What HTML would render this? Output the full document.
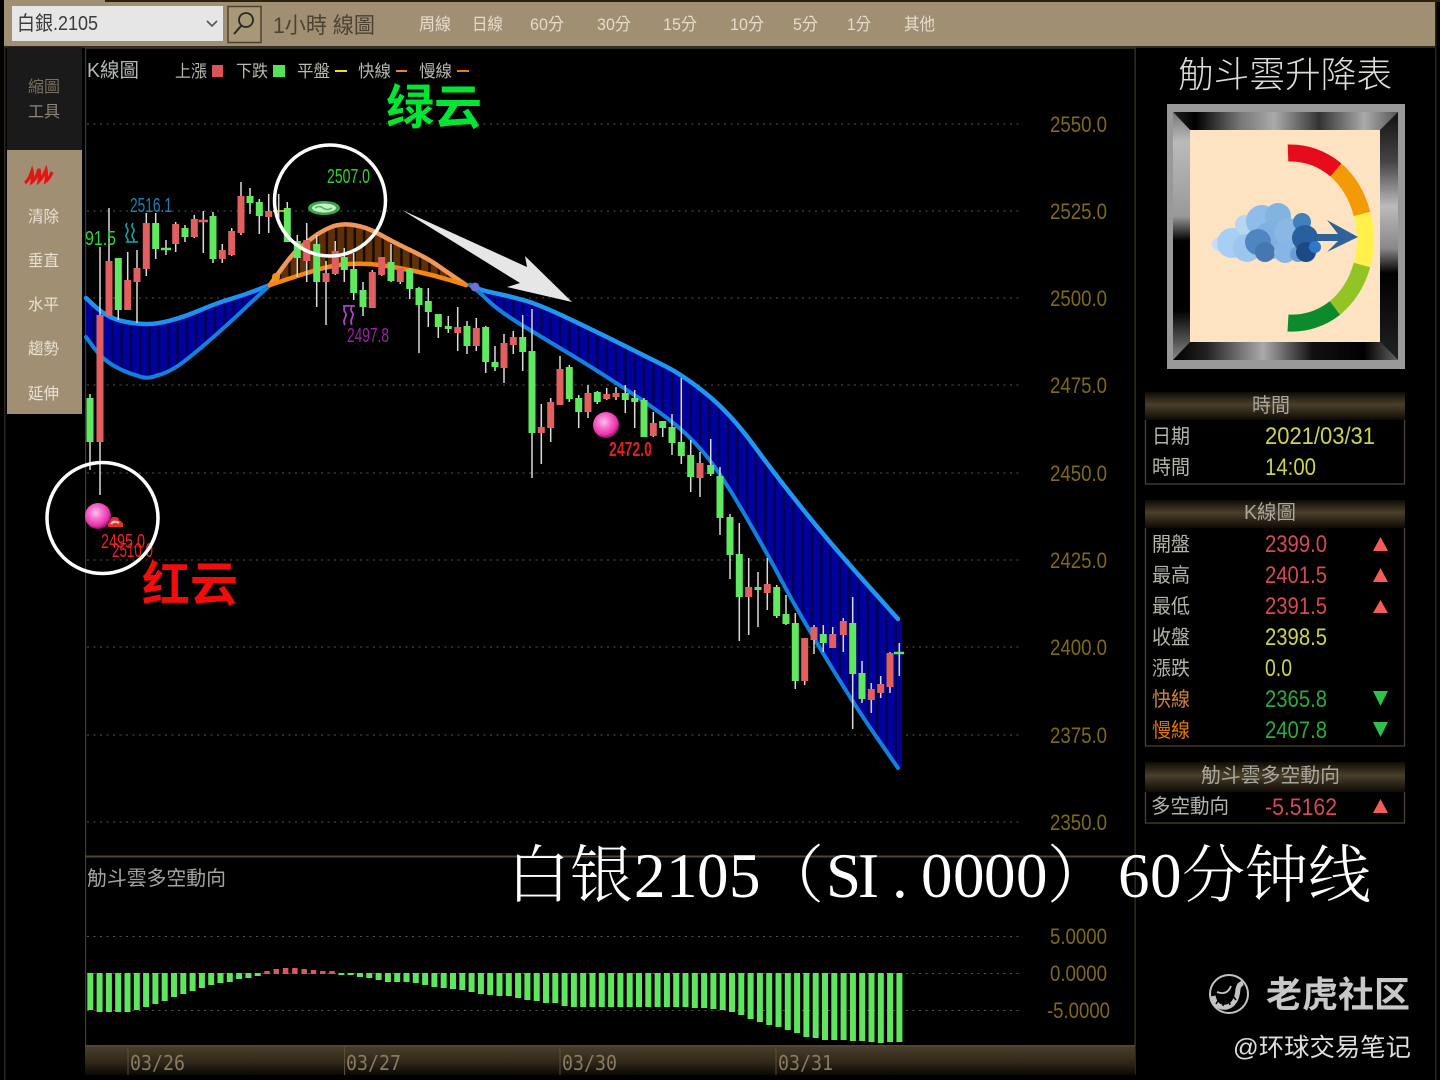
<!DOCTYPE html>
<html><head><meta charset="utf-8"><title>白银2105 60分钟线</title>
<style>
html,body{margin:0;padding:0;background:#000}
svg{display:block}
text{font-family:"Liberation Sans","Noto Sans CJK TC",sans-serif;white-space:pre}
.side{fill:#e9e1d2;font-size:16px}
.leg{fill:#b9b9b0;font-size:17px}
.lb{fill:#b4b4ac;font-size:20px}
.hd{fill:#a8a8a0;font-size:20px}
.ax{fill:#7f6a18;font-size:22px}
.val{font-size:24px}
.mn{fill:#e6dccb;font-size:17px}
.dt{font-family:"DejaVu Sans Mono",monospace;font-size:20px;fill:#8a7b60}
</style></head>
<body>
<svg width="1440" height="1080" viewBox="0 0 1440 1080" xmlns="http://www.w3.org/2000/svg">
<defs>
<pattern id="bl" patternUnits="userSpaceOnUse" x="85.5" y="0" width="9.33" height="10"><rect width="9.33" height="10" fill="#00009c"/><rect x="6.8" width="2.53" height="10" fill="#00004c"/></pattern>
<pattern id="br" patternUnits="userSpaceOnUse" x="85.5" y="0" width="9.33" height="10"><rect width="9.33" height="10" fill="#5f3008"/><rect x="6.8" width="2.53" height="10" fill="#160b02"/></pattern>
<linearGradient id="hdg" x1="0" y1="0" x2="0" y2="1"><stop offset="0" stop-color="#0e0b05"/><stop offset=".45" stop-color="#4a3f2a"/><stop offset="1" stop-color="#0e0b05"/></linearGradient>
<linearGradient id="axg" x1="0" y1="0" x2="0" y2="1"><stop offset="0" stop-color="#4a3f2b"/><stop offset=".55" stop-color="#30281a"/><stop offset="1" stop-color="#0a0804"/></linearGradient>
<linearGradient id="bt" x1="0" y1="0" x2="1" y2="0"><stop offset="0" stop-color="#222"/><stop offset=".1" stop-color="#000"/><stop offset=".3" stop-color="#777"/><stop offset=".45" stop-color="#aaa"/><stop offset=".65" stop-color="#333"/><stop offset=".85" stop-color="#aaa"/><stop offset="1" stop-color="#555"/></linearGradient>
<linearGradient id="bb" x1="0" y1="0" x2="1" y2="0"><stop offset="0" stop-color="#000"/><stop offset=".15" stop-color="#222"/><stop offset=".4" stop-color="#aaa"/><stop offset=".62" stop-color="#111"/><stop offset=".85" stop-color="#000"/><stop offset="1" stop-color="#666"/></linearGradient>
<linearGradient id="bl1" x1="0" y1="0" x2="0" y2="1"><stop offset="0" stop-color="#777"/><stop offset=".12" stop-color="#bbb"/><stop offset=".42" stop-color="#999"/><stop offset=".52" stop-color="#000"/><stop offset=".8" stop-color="#000"/><stop offset="1" stop-color="#888"/></linearGradient>
<linearGradient id="br1" x1="0" y1="0" x2="0" y2="1"><stop offset="0" stop-color="#111"/><stop offset=".2" stop-color="#444"/><stop offset=".38" stop-color="#bbb"/><stop offset=".55" stop-color="#888"/><stop offset=".65" stop-color="#000"/><stop offset="1" stop-color="#222"/></linearGradient>
<radialGradient id="ball" cx=".42" cy=".38" r=".62"><stop offset="0" stop-color="#ffc4ee"/><stop offset=".35" stop-color="#f878d2"/><stop offset=".8" stop-color="#ea30aa"/><stop offset="1" stop-color="#90106a"/></radialGradient>
</defs>

<rect width="1440" height="1080" fill="#000"/>

<!-- top toolbar -->
<rect x="4" y="0" width="1431" height="46" fill="#a08f73"/>
<rect x="105" y="0" width="1335" height="2" fill="#2a2010"/>
<rect x="4" y="46" width="1431" height="2" fill="#30281a"/>
<rect x="12" y="6" width="211" height="35" fill="#e6e6e6"/>
<text x="17" y="30" font-size="20" fill="#3c3c3c" textLength="81" lengthAdjust="spacingAndGlyphs">白銀.2105</text>
<path d="M207 21l5 5 5-5" fill="none" stroke="#555" stroke-width="1.6"/>
<rect x="228" y="6.500" width="33" height="36" fill="#a89878" stroke="#4a4030" stroke-width="1.5"/>
<circle cx="246" cy="20" r="7" fill="none" stroke="#2a2a20" stroke-width="1.8"/>
<path d="M241 26l-7 8" stroke="#2a2a20" stroke-width="2" fill="none"/>
<text x="273" y="33" font-size="22" fill="#4c4232" textLength="102" lengthAdjust="spacingAndGlyphs">1小時 線圖</text>
<text class="mn" x="419" y="30" textLength="32" lengthAdjust="spacingAndGlyphs">周線</text>
<text class="mn" x="472" y="30" textLength="31" lengthAdjust="spacingAndGlyphs">日線</text>
<text class="mn" x="530" y="30" textLength="34" lengthAdjust="spacingAndGlyphs">60分</text>
<text class="mn" x="597" y="30" textLength="34" lengthAdjust="spacingAndGlyphs">30分</text>
<text class="mn" x="663" y="30" textLength="34" lengthAdjust="spacingAndGlyphs">15分</text>
<text class="mn" x="730" y="30" textLength="34" lengthAdjust="spacingAndGlyphs">10分</text>
<text class="mn" x="793" y="30" textLength="25" lengthAdjust="spacingAndGlyphs">5分</text>
<text class="mn" x="847" y="30" textLength="24" lengthAdjust="spacingAndGlyphs">1分</text>
<text class="mn" x="904" y="30" textLength="31" lengthAdjust="spacingAndGlyphs">其他</text>

<!-- frame lines -->
<rect x="4" y="46" width="1.500" height="1034" fill="#302818"/>
<rect x="85" y="48" width="1.200" height="1027" fill="#3c3c38"/>
<rect x="1134.500" y="48" width="1.200" height="1027" fill="#403828"/>
<rect x="1435" y="0" width="1.500" height="1080" fill="#2a2418"/>
<rect x="85" y="47.500" width="1050" height="1.200" fill="#3c3a34"/>
<rect x="85" y="855.500" width="1050" height="2" fill="#4f4433"/>

<!-- sidebar -->
<rect x="7" y="47" width="75" height="103" fill="#1a1a1a"/>
<rect x="7" y="150" width="75" height="264" fill="#a08f73"/>
<text x="28" y="92" font-size="16" fill="#78705f" textLength="32" lengthAdjust="spacingAndGlyphs">縮圖</text>
<text x="28" y="117" font-size="16" fill="#8f8677" textLength="32" lengthAdjust="spacingAndGlyphs">工具</text>
<path d="M25 183q4-3 7-12 1 4 0 11 4-3 7-13 1 5 0 12 4-4 7-11 1 5 0 11 4-3 6-9" fill="none" stroke="#e41414" stroke-width="3.200"/>
<text class="side" x="28" y="222" textLength="31" lengthAdjust="spacingAndGlyphs">清除</text>
<text class="side" x="28" y="266" textLength="31" lengthAdjust="spacingAndGlyphs">垂直</text>
<text class="side" x="28" y="310" textLength="31" lengthAdjust="spacingAndGlyphs">水平</text>
<text class="side" x="28" y="354" textLength="31" lengthAdjust="spacingAndGlyphs">趨勢</text>
<text class="side" x="28" y="399" textLength="31" lengthAdjust="spacingAndGlyphs">延伸</text>

<!-- legend -->
<text x="87" y="77" font-size="20" fill="#b4b8b8" textLength="52" lengthAdjust="spacingAndGlyphs">K線圖</text>
<text class="leg" x="175" y="77" textLength="32" lengthAdjust="spacingAndGlyphs">上漲</text>
<rect x="212" y="65" width="11" height="12" fill="#d9535a"/>
<text class="leg" x="236" y="77" textLength="32" lengthAdjust="spacingAndGlyphs">下跌</text>
<rect x="273" y="65" width="12" height="12" fill="#58e058"/>
<text class="leg" x="297" y="77" textLength="33" lengthAdjust="spacingAndGlyphs">平盤</text>
<rect x="335" y="70" width="12" height="2" fill="#e8e020"/>
<text class="leg" x="358" y="77" textLength="33" lengthAdjust="spacingAndGlyphs">快線</text>
<rect x="396" y="70" width="11" height="2" fill="#e8843c"/>
<text class="leg" x="419" y="77" textLength="33" lengthAdjust="spacingAndGlyphs">慢線</text>
<rect x="457" y="70" width="12" height="2" fill="#f07a10"/>

<!-- grid -->
<g stroke="#5c5242" stroke-width="1" stroke-dasharray="2 4.500" fill="none">
<path d="M87 124H1020M87 211H1020M87 298H1020M87 385H1020M87 473H1020M87 560H1020M87 647H1020M87 735H1020M87 822H1020"/>
<path d="M87 936.500H1020M87 973.500H1020M87 1010.500H1020"/>
</g>
<text class="ax" x="1050" y="132" textLength="57" lengthAdjust="spacingAndGlyphs">2550.0</text>
<text class="ax" x="1050" y="219" textLength="57" lengthAdjust="spacingAndGlyphs">2525.0</text>
<text class="ax" x="1050" y="306" textLength="57" lengthAdjust="spacingAndGlyphs">2500.0</text>
<text class="ax" x="1050" y="393" textLength="57" lengthAdjust="spacingAndGlyphs">2475.0</text>
<text class="ax" x="1050" y="481" textLength="57" lengthAdjust="spacingAndGlyphs">2450.0</text>
<text class="ax" x="1050" y="568" textLength="57" lengthAdjust="spacingAndGlyphs">2425.0</text>
<text class="ax" x="1050" y="655" textLength="57" lengthAdjust="spacingAndGlyphs">2400.0</text>
<text class="ax" x="1050" y="743" textLength="57" lengthAdjust="spacingAndGlyphs">2375.0</text>
<text class="ax" x="1050" y="830" textLength="57" lengthAdjust="spacingAndGlyphs">2350.0</text>
<text class="ax" x="1050" y="944" textLength="57" lengthAdjust="spacingAndGlyphs">5.0000</text>
<text class="ax" x="1050" y="981" textLength="57" lengthAdjust="spacingAndGlyphs">0.0000</text>
<text class="ax" x="1047" y="1018" textLength="63" lengthAdjust="spacingAndGlyphs">-5.0000</text>

<!-- bands -->
<path d="M86 298L93.5 305Q101 312 108.5 316Q116 320 126.5 322Q137 324 147 324Q157 324 170.5 320.5Q184 317 200.5 310Q217 303 230.5 299Q244 295 257 290L270 285L251 302.5Q233 320 210 340Q187 360 177 366.5Q167 373 157 375.5Q147 380 137 375.5Q127 373 115 366.5Q103 360 94.5 348.5L86 337Z" fill="url(#bl)"/>
<path d="M270 285L281.5 269Q293 253 300 247.5Q307 242 313.5 237Q320 232 330 227.5Q340 223 353.5 225Q367 227 380 234.5Q393 242 410 250Q427 258 437 265Q447 272 456.5 278.5L466 285L449.5 280Q433 275 416.5 271.5Q400 268 383.5 265.5Q367 263 350 264Q333 265 316.5 270Q300 275 285 280Z" fill="url(#br)"/>
<path d="M470 285L475 287.5Q480 290 496.5 293.5Q513 297 526.5 301Q540 305 568.5 318.5Q597 332 622 344.5Q647 357 665 366Q683 375 706.5 394Q730 413 753.5 445Q777 477 803.5 510Q830 543 864 581L898 619L902 622V768H898L875.5 735.5Q853 703 825 656.5Q797 610 782 581.5Q767 553 743.5 512.5Q720 472 703.5 452.5Q687 433 667 418Q647 403 620 385.5Q593 368 571.5 355Q550 342 525 327Q500 312 488.5 301Q477 290 473.5 287.5Z" fill="url(#bl)"/>
<g fill="none" stroke-linejoin="round" stroke-linecap="round">
<path d="M86 298L93.5 305Q101 312 108.5 316Q116 320 126.5 322Q137 324 147 324Q157 324 170.5 320.5Q184 317 200.5 310Q217 303 230.5 299Q244 295 257 290L270 285" stroke="#1e92f2" stroke-width="4.500"/>
<path d="M86 337L94.5 348.5Q103 360 115 366.5Q127 373 137 375.5Q147 380 157 375.5Q167 373 177 366.5Q187 360 210 340Q233 320 251 302.5L270 285" stroke="#1580dc" stroke-width="4"/>
<path d="M270 285L281.5 269Q293 253 300 247.5Q307 242 313.5 237Q320 232 330 227.5Q340 223 353.5 225Q367 227 380 234.5Q393 242 410 250Q427 258 437 265Q447 272 456.5 278.5L466 285" stroke="#f09858" stroke-width="4.500"/>
<path d="M270 285L285 280Q300 275 316.5 270Q333 265 350 264Q367 263 383.5 265.5Q400 268 416.5 271.5Q433 275 449.5 280L466 285" stroke="#f5860f" stroke-width="4.500"/>
<path d="M470 285L475 287.5Q480 290 496.5 293.5Q513 297 526.5 301Q540 305 568.5 318.5Q597 332 622 344.5Q647 357 665 366Q683 375 706.5 394Q730 413 753.5 445Q777 477 803.5 510Q830 543 864 581L898 619" stroke="#2098f2" stroke-width="4.500"/>
<path d="M470 285L473.5 287.5Q477 290 488.5 301Q500 312 525 327Q550 342 571.5 355Q593 368 620 385.5Q647 403 667 418Q687 433 703.5 452.5Q720 472 743.5 512.5Q767 553 782 581.5Q797 610 825 656.5Q853 703 875.5 735.5L898 768" stroke="#1580dc" stroke-width="4"/>
</g>
<circle cx="276" cy="277" r="4" fill="#f09418"/>
<circle cx="475" cy="287" r="4.500" fill="#6f6fd8"/>

<!-- wicks -->
<path fill="none" stroke="#dadada" stroke-width="1.500" d="M90 394V470M100 247V495M109 208V316M118.300 258V320M127.700 252V310M137 250V323M146.300 213V276M155.700 213V259M166 240V255M175.700 222V252M185 225V242M194.300 215V238M203.300 211V253M213 212V263M222.300 244V263M231.700 228V256M241 182V235M250 188V214M259.300 199V234M268.700 194V233M278.700 194V222M287.300 202V242M297.300 235V277M306.700 223V282M316.700 235V307M326 261V325M335.300 241V275M344.300 248V282M353.700 253V300M363 282V316M372.300 270V308M381.700 257V276M391 244V282M400.300 268V284M409.700 268V299M419 287V353M428.300 288V327M438.300 314V338M448.300 316V333M457.700 307V351M467 321V354M476.300 318V351M485.700 326V373M495 346V371M504 334V383M513.300 331V354M522.700 315V371M532 309V478M541.300 404V464M550.700 398V442M560 356V405M569.300 365V402M578.700 395V428M588 385V418M597.300 391V404M606.700 388V400M616 387V400M625.300 385V413M634.700 390V428M644 398V437M653.300 412V437M662.700 421V437M672 414V455M681.300 378V464M690.700 440V492M700 452V497M710.700 439V476M720 467V535M730 514V579M739.300 523V641M748.700 558V635M758 572V627M767.300 558V610M776.700 585V618M786 595V625M795.300 613V689M804.700 638V685M814 625V654M823.300 625V652M832.700 627V648M843.300 618V652M852.700 597V729M862 661V703M871.300 683V713M880.700 676V698M890 652V693M899.300 643V676"/>
<!-- red bodies -->
<path fill="none" stroke="#e25f60" stroke-width="7" d="M100 315V442M109 261V316M127.700 280V310M137 268V282M146.300 223V269M175.700 224V244M194.300 219V237M222.300 250V259M231.700 231V255M241 196V233M268.700 211V217M306.700 240V261M326 273V282M335.300 251V274M372.300 272V308M381.700 257V275M400.300 268V282M457.700 327V333M476.300 328V346M504 343V368M513.300 337V345M541.300 427V433M550.700 402V428M560 369V405M588 393V412M606.700 394V399M616 393V397M653.300 423V436M700 463V478M748.700 587V597M767.300 584V593M804.700 638V681M814 627V640M832.700 634V648M843.300 621V635M871.300 689V700M880.700 684V693M890 653V687"/>
<path fill="none" stroke="#e25f60" stroke-width="2.500" d="M198.500 221H208"/>
<!-- green bodies -->
<path fill="none" stroke="#60e860" stroke-width="7" d="M90 398V442M118.300 258V310M155.700 223V249M185 228V237M213 216V259M250 196V203M259.300 202V216M287.300 208V242M297.300 241V258M316.700 244V282M344.300 257V270M353.700 269V293M363 290V307M391 262V281M409.700 269V289M419 288V305M428.300 301V312M438.300 314V327M448.300 326V329M467 326V346M485.700 327V362M495 362V367M522.700 337V352M532 351V433M569.300 367V399M578.700 398V412M597.300 392V402M625.300 393V400M634.700 398V402M644 400V437M662.700 421V428M672 427V443M681.300 442V456M690.700 455V477M710.700 465V474M720 476V518M730 517V555M739.300 554V597M758 587V590M776.700 587V616M786 614V624M795.300 623V681M823.300 634V643M852.700 623V674M862 673V699"/>
<path fill="none" stroke="#60e860" stroke-width="2.500" d="M161 249H171M894 653H904"/>
<path fill="none" stroke="#e6e020" stroke-width="1.500" d="M273 211H285"/>

<!-- histogram -->
<path fill="none" stroke="#5ee65e" stroke-width="6" d="M90.300 973V1010M99.600 973V1012M108.900 973V1012M118.200 973V1012M127.500 973V1012M136.800 973V1010M146.100 973V1007M155.400 973V1004M164.700 973V1001M174 973V997M183.300 973V994M192.600 973V991M201.900 973V988M211.200 973V985M220.500 973V983M229.800 973V982M239.100 973V979M248.400 973V978M257.700 973V976M341.400 973V975M350.700 973V975M360 973V977M369.300 973V978M378.600 973V980M387.900 973V982M397.200 973V982M406.500 973V982M415.800 973V983M425.100 973V985M434.400 973V987M443.700 973V988M453 973V989M462.300 973V990M471.600 973V992M480.900 973V994M490.200 973V995M499.500 973V996M508.800 973V996M518.100 973V998M527.400 973V1000M536.700 973V1001M546 973V1003M555.300 973V1003M564.600 973V1006M573.900 973V1007M583.200 973V1007M592.500 973V1007M601.800 973V1007M611.100 973V1007M620.400 973V1007M629.700 973V1007M639 973V1007M648.300 973V1007M657.600 973V1007M666.900 973V1007M676.200 973V1007M685.500 973V1007M694.800 973V1008M704.100 973V1008M713.400 973V1009M722.700 973V1010M732 973V1012M741.300 973V1015M750.600 973V1019M759.900 973V1022M769.200 973V1025M778.500 973V1027M787.800 973V1030M797.100 973V1033M806.400 973V1037M815.700 973V1038M825 973V1040M834.300 973V1040M843.600 973V1040M852.900 973V1041M862.200 973V1041M871.500 973V1042M880.800 973V1043M890.100 973V1042M899.400 973V1042"/>
<path fill="none" stroke="#d85860" stroke-width="5.500" d="M267 971V974M276.300 969V974M285.600 968V974M294.900 968V974M304.200 969V974M313.500 970V974M322.800 971V974M332.100 971V974"/>

<!-- x axis -->
<rect x="85" y="1046" width="1050" height="29" fill="url(#axg)"/>
<rect x="85" y="1045" width="1050" height="1.500" fill="#544833"/>
<path d="M128 1046V1075M344.500 1046V1075M560 1046V1075M776 1046V1075" stroke="#5a4e38" stroke-width="1"/>
<text class="dt" x="130" y="1070" textLength="55" lengthAdjust="spacingAndGlyphs">03/26</text>
<text class="dt" x="346" y="1070" textLength="55" lengthAdjust="spacingAndGlyphs">03/27</text>
<text class="dt" x="562" y="1070" textLength="55" lengthAdjust="spacingAndGlyphs">03/30</text>
<text class="dt" x="778" y="1070" textLength="55" lengthAdjust="spacingAndGlyphs">03/31</text>
<text x="87" y="885" font-size="20" fill="#a4a4a0" textLength="139" lengthAdjust="spacingAndGlyphs">觔斗雲多空動向</text>

<!-- chart labels -->
<text x="327" y="183" font-size="20" fill="#30d030" textLength="43" lengthAdjust="spacingAndGlyphs">2507.0</text>
<ellipse cx="324" cy="208" rx="16" ry="7" fill="#3aa84a"/>
<ellipse cx="324" cy="208" rx="12" ry="4.500" fill="#c8f0c8"/>
<path d="M315 208q4-3 8 0t9 0" stroke="#4ab85a" stroke-width="1.500" fill="none"/>
<text x="130" y="212" font-size="20" fill="#1a80b8" textLength="42" lengthAdjust="spacingAndGlyphs">2516.1</text>
<text x="85" y="245" font-size="20" fill="#28d838" textLength="31" lengthAdjust="spacingAndGlyphs">91.5</text>
<path d="M127 223q-2 3 0 5t0 5 0 5 0 4h5M133 223q-2 3 0 5t0 5 0 5 0 4h5" fill="none" stroke="#18a8b8" stroke-width="1.500"/>
<path d="M343 306h12M345 306q-2 4 0 6t0 6 0 7M352 306q-2 4 0 6t0 6 0 7" fill="none" stroke="#b040c8" stroke-width="1.800"/>
<text x="347" y="342" font-size="20" fill="#a020a8" textLength="42" lengthAdjust="spacingAndGlyphs">2497.8</text>
<circle cx="606" cy="425" r="13" fill="url(#ball)"/>
<text x="609" y="456" font-size="20" font-weight="bold" fill="#e02020" textLength="43" lengthAdjust="spacingAndGlyphs">2472.0</text>
<path d="M108 527q-1-5 2-6 1-5 5-4 4 0 4 3 5 2 4 7Z" fill="#e03030"/><path d="M111 524q3-4 8-1" stroke="#fbd0c0" stroke-width="2" fill="none"/>
<circle cx="98" cy="516" r="13" fill="url(#ball)"/>
<text x="101" y="548" font-size="20" fill="#f02020" textLength="44" lengthAdjust="spacingAndGlyphs">2495.0</text>
<text x="112" y="557" font-size="20" fill="#f02020" textLength="41" lengthAdjust="spacingAndGlyphs">2510.0</text>

<!-- annotations -->
<circle cx="330" cy="200.500" r="55.500" fill="none" stroke="#fff" stroke-width="3.500"/>
<circle cx="102.500" cy="518" r="55.500" fill="none" stroke="#fff" stroke-width="3.500"/>
<path d="M402 210L527 267 525 256 572 302 507 287 520 283Z" fill="#e6e6e6"/>
<text x="386" y="124" font-size="48" font-weight="bold" fill="#00e632" style="font-family:'Noto Sans CJK SC',sans-serif">绿云</text>
<text x="142" y="601" font-size="48" font-weight="bold" fill="#f40c0c" style="font-family:'Noto Sans CJK SC',sans-serif">红云</text>

<!-- right panel title -->
<text x="1178" y="87" font-size="36" font-weight="300" fill="#dcdcd8" textLength="214" lengthAdjust="spacingAndGlyphs">觔斗雲升降表</text>

<!-- gauge image -->
<rect x="1167" y="104" width="238" height="265" fill="#999"/>
<polygon points="1173,112 1398,112 1380,130 1190,130" fill="url(#bt)"/>
<polygon points="1173,112 1190,130 1190,342 1173,360" fill="url(#bl1)"/>
<polygon points="1398,112 1380,130 1380,342 1398,360" fill="url(#br1)"/>
<polygon points="1173,360 1190,342 1380,342 1398,360" fill="url(#bb)"/>
<rect x="1190" y="130" width="190" height="212" fill="#fde3c2"/>
<g fill="none" stroke-width="17">
<path d="M1288 153A76 86 0 0 1 1336 170" stroke="#e60b1a"/>
<path d="M1336 170A76 86 0 0 1 1362 214" stroke="#f29a08"/>
<path d="M1362 214A76 86 0 0 1 1362 265" stroke="#fff04c"/>
<path d="M1362 265A76 86 0 0 1 1335 308" stroke="#92c426"/>
<path d="M1335 308A76 86 0 0 1 1288 323" stroke="#0c8a2c"/>
</g>
<path d="M1310 234H1338L1327 220 1358 237 1327 252 1338 241H1310Z" fill="#2f6398"/>
<g>
<circle cx="1219" cy="244" r="7" fill="#c4e0f7"/>
<circle cx="1232" cy="243" r="15" fill="#a8cff3"/>
<circle cx="1245" cy="225" r="10" fill="#b6d6f2"/>
<circle cx="1247" cy="248" r="14" fill="#9cc6ee"/>
<circle cx="1262" cy="221" r="16" fill="#8fbce8"/>
<circle cx="1278" cy="216" r="13" fill="#82b4e2"/>
<circle cx="1272" cy="240" r="19" fill="#7eb0e0"/>
<circle cx="1258" cy="242" r="13" fill="#4f86c2"/>
<circle cx="1265" cy="252" r="10" fill="#4577b0"/>
<circle cx="1288" cy="232" r="14" fill="#8ab7e4"/>
<circle cx="1285" cy="252" r="11" fill="#88b6e4"/>
<circle cx="1298" cy="254" r="8" fill="#6a9fd6"/>
<circle cx="1302" cy="222" r="9" fill="#4080bc"/>
<circle cx="1305" cy="238" r="13" fill="#2a5f9e"/>
<circle cx="1306" cy="252" r="10" fill="#1c4a85"/>
<circle cx="1315" cy="247" r="6" fill="#2f78c8"/>
</g>

<!-- panels -->
<g fill="none" stroke="#4a4334" stroke-width="1.300">
<path d="M1145.500 420V484H1404.500V420"/>
<path d="M1145.500 528V746H1404.500V528"/>
<path d="M1145.500 792V823H1404.500V792"/>
</g>
<rect x="1145" y="392" width="260" height="28" fill="url(#hdg)"/>
<rect x="1145" y="500" width="260" height="28" fill="url(#hdg)"/>
<rect x="1145" y="762" width="260" height="30" fill="url(#hdg)"/>
<text class="hd" x="1252" y="412" textLength="38" lengthAdjust="spacingAndGlyphs">時間</text>
<text class="hd" x="1244" y="519" textLength="52" lengthAdjust="spacingAndGlyphs">K線圖</text>
<text class="hd" x="1201" y="782" textLength="139" lengthAdjust="spacingAndGlyphs">觔斗雲多空動向</text>

<text class="lb" x="1152" y="443" textLength="38" lengthAdjust="spacingAndGlyphs">日期</text>
<text class="lb" x="1152" y="474" textLength="38" lengthAdjust="spacingAndGlyphs">時間</text>
<text class="lb" x="1152" y="551" textLength="38" lengthAdjust="spacingAndGlyphs">開盤</text>
<text class="lb" x="1152" y="582" textLength="38" lengthAdjust="spacingAndGlyphs">最高</text>
<text class="lb" x="1152" y="613" textLength="38" lengthAdjust="spacingAndGlyphs">最低</text>
<text class="lb" x="1152" y="644" textLength="38" lengthAdjust="spacingAndGlyphs">收盤</text>
<text class="lb" x="1152" y="675" textLength="38" lengthAdjust="spacingAndGlyphs">漲跌</text>
<text class="lb" x="1152" y="706" style="fill:#d08440" textLength="38" lengthAdjust="spacingAndGlyphs">快線</text>
<text class="lb" x="1152" y="737" style="fill:#e07808" textLength="38" lengthAdjust="spacingAndGlyphs">慢線</text>
<text class="lb" x="1151" y="813" textLength="78" lengthAdjust="spacingAndGlyphs">多空動向</text>

<text class="val" x="1265" y="444" fill="#cfd24c" textLength="110" lengthAdjust="spacingAndGlyphs">2021/03/31</text>
<text class="val" x="1265" y="475" fill="#cfd24c" textLength="51" lengthAdjust="spacingAndGlyphs">14:00</text>
<text class="val" x="1265" y="552" fill="#d44a52" textLength="62" lengthAdjust="spacingAndGlyphs">2399.0</text>
<text class="val" x="1265" y="583" fill="#d44a52" textLength="62" lengthAdjust="spacingAndGlyphs">2401.5</text>
<text class="val" x="1265" y="614" fill="#d44a52" textLength="62" lengthAdjust="spacingAndGlyphs">2391.5</text>
<text class="val" x="1265" y="645" fill="#cfd24c" textLength="62" lengthAdjust="spacingAndGlyphs">2398.5</text>
<text class="val" x="1265" y="676" fill="#cfd24c" textLength="27" lengthAdjust="spacingAndGlyphs">0.0</text>
<text class="val" x="1265" y="707" fill="#2fa83f" textLength="62" lengthAdjust="spacingAndGlyphs">2365.8</text>
<text class="val" x="1265" y="738" fill="#2fa83f" textLength="62" lengthAdjust="spacingAndGlyphs">2407.8</text>
<text class="val" x="1265" y="815" fill="#d44a52" textLength="72" lengthAdjust="spacingAndGlyphs">-5.5162</text>

<path fill="#f45c5c" d="M1373 551L1380.500 537 1388 551ZM1373 582L1380.500 568 1388 582ZM1373 613L1380.500 600 1388 613ZM1373 813L1380.500 799 1388 813Z"/>
<path fill="#2fc24a" d="M1373 691L1388 691 1380.500 706ZM1373 722L1388 722 1380.500 737Z"/>

<!-- big title -->
<text y="897" font-size="63" font-weight="300" fill="#fff" style="font-family:'Liberation Serif','Noto Serif CJK SC',serif" x="507 570 634 666 697 729 761 826 858 892 921 953 984 1016 1047 1118 1150 1182 1245 1308">白银2105（SI.0000）60分钟线</text>

<!-- watermark -->
<circle cx="1229" cy="994" r="19" fill="none" stroke="#c4c4c4" stroke-width="2"/>
<path d="M1213 996q3 13 14 11 10-3 11-18 1-5 5-6" fill="none" stroke="#c4c4c4" stroke-width="5"/>
<path d="M1217 992q10 4 14-6" fill="none" stroke="#c4c4c4" stroke-width="1.800"/>
<path d="M1219 999l-3 5M1224 1000l-1 6M1229 999l1 6M1233 996l3 4" stroke="#000" stroke-width="1.500"/>
<text x="1266" y="1007" font-size="36" font-weight="bold" fill="#c8c8c8" textLength="144" lengthAdjust="spacingAndGlyphs" style="font-family:'Noto Sans CJK SC',sans-serif">老虎社区</text>
<text x="1233" y="1056" font-size="25" fill="#dedede" textLength="178" lengthAdjust="spacingAndGlyphs" style="font-family:'Liberation Sans','Noto Sans CJK SC',sans-serif">@环球交易笔记</text>
</svg>
</body></html>
